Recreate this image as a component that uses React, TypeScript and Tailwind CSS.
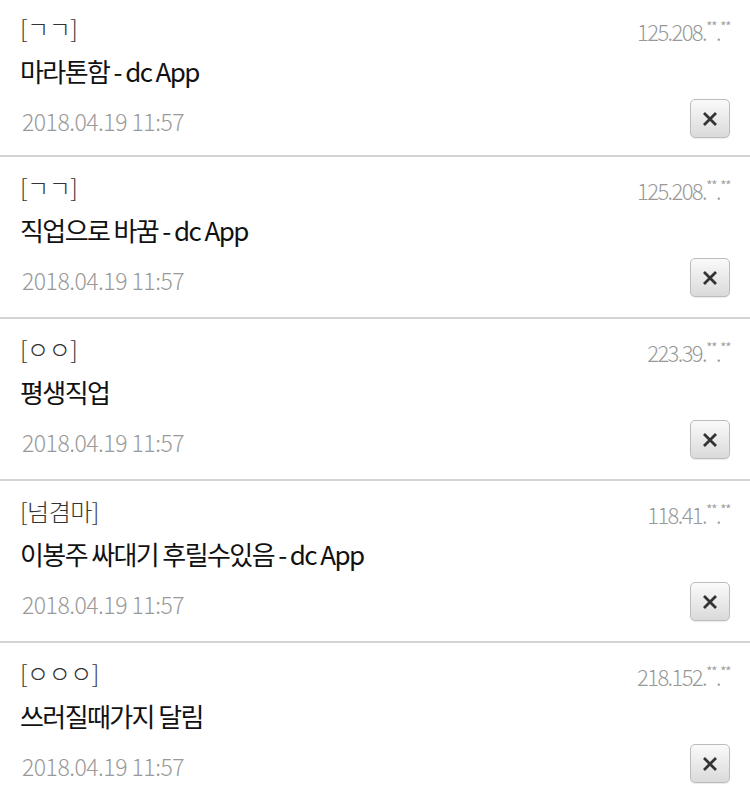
const comments = [
  { nick: '[ㄱㄱ]', ip: '125.208.', body: '마라톤함 - dc App' },
  { nick: '[ㄱㄱ]', ip: '125.208.', body: '직업으로 바꿈 - dc App' },
  { nick: '[ㅇㅇ]', ip: '223.39.', body: '평생직업' },
  { nick: '[넘겸마]', ip: '118.41.', body: '이봉주 싸대기 후릴수있음 - dc App' },
  { nick: '[ㅇㅇㅇ]', ip: '218.152.', body: '쓰러질때가지 달림' },
]

const font = { fontFamily: '"Noto Sans CJK KR", "Noto Sans", sans-serif' }

function CloseButton() {
  return (
    <button className="w-[40px] h-[39px] rounded-[5px] border border-[#bcbcbc] bg-gradient-to-b from-[#fafafa] to-[#dadada] shadow-[0_1px_1px_rgba(0,0,0,0.08)] flex items-center justify-center">
      <svg width="16" height="16" viewBox="0 0 16 16">
        <path d="M2 2L14 14M14 2L2 14" stroke="#333" strokeWidth="2.8" />
      </svg>
    </button>
  )
}

function Comment({ nick, ip, body, first }: { nick: string; ip: string; body: string; first?: boolean }) {
  return (
    <div
      className={`flex justify-between border-b-2 border-[#d4d4d4] px-[20px] ${first ? 'h-[159px] -mt-[2px]' : 'h-[162px]'}`}
    >
      <div className="flex flex-col pt-[15px]">
        <div className="h-[30px] leading-[30px] text-[24px] font-light text-[#333] tracking-[-0.5px]">{nick}</div>
        <div className="mt-[10px] h-[36px] leading-[36px] text-[26px] text-[#111] tracking-[-1.6px]">{body}</div>
        <div className="mt-[16px] h-[32px] leading-[32px] text-[23px] font-light text-[#9a9a9a] tracking-[-0.5px] pl-[2px]">
          2018.04.19 11:57
        </div>
      </div>
      <div className="flex flex-col items-end pt-[20px]">
        <div className="h-[26px] leading-[26px] text-[22px] font-light text-[#999] tracking-[-1.6px]">
          {ip}
          <span className="text-[15px] align-top leading-[18px]">**</span>.
          <span className="text-[15px] align-top leading-[18px]">**</span>
        </div>
        <div className="mt-[55px]">
          <CloseButton />
        </div>
      </div>
    </div>
  )
}

function App() {
  return (
    <div className="w-[750px] h-[800px] overflow-hidden bg-white" style={font}>
      {comments.map((c, i) => (
        <Comment key={i} {...c} first={i === 0} />
      ))}
    </div>
  )
}

export default App
